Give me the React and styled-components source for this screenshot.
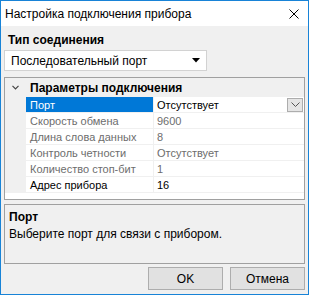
import React from 'react';
import styled, { createGlobalStyle } from 'styled-components';

const Global = createGlobalStyle`
  html, body { margin: 0; padding: 0; background: #ffffff; }
  * { box-sizing: border-box; }
`;

const FONT = `"Liberation Sans", Arial, sans-serif`;

const Window = styled.div`
  width: 309px;
  height: 295px;
  border: 1px solid #1883d7;
  display: flex;
  flex-direction: column;
  font-family: ${FONT};
  font-size: 12px;
  color: #000;
`;

const TitleBar = styled.div`
  height: 25px;
  background: #fff;
  display: flex;
  align-items: center;
  justify-content: space-between;
  padding: 0 9px 0 4px;
`;

const Title = styled.span`
  font-size: 12px;
  padding-top: 1px;
`;

const Body = styled.div`
  flex: 1;
  background: #f0f0f0;
  display: flex;
  flex-direction: column;
  padding: 5px 3px 3px 3px;
`;

const SectionLabel = styled.div`
  font-weight: bold;
  font-size: 12px;
  height: 19px;
  padding-left: 4px;
  line-height: 14px;
  padding-top: 2px;
`;

const Combo = styled.div`
  width: 203px;
  height: 21px;
  background: #fff;
  border: 1px solid #d2d2d2;
  display: flex;
  align-items: center;
  justify-content: space-between;
  padding: 0 6px 0 6px;
  margin-bottom: 6px;
`;

const Grid = styled.div`
  height: 123px;
  background: #fff;
  border: 1px solid #a0a0a0;
  display: flex;
  flex-direction: column;
  font-size: 11px;
`;

const CategoryRow = styled.div`
  height: 19px;
  display: flex;
  align-items: center;
  background: #f0f0f0;
`;

const Margin = styled.div`
  width: 21px;
  flex: none;
  align-self: stretch;
  background: #f0f0f0;
  display: flex;
  align-items: center;
  justify-content: center;
`;

const CategoryName = styled.span`
  font-weight: bold;
  font-size: 12px;
  padding-left: 4px;
`;

const Row = styled.div`
  height: 16px;
  display: flex;
  border-bottom: 1px solid #f0f0f0;
`;

const NameCell = styled.div`
  width: 128px;
  flex: none;
  padding-left: 4px;
  display: flex;
  align-items: center;
  border-right: 1px solid #f0f0f0;
  background: ${p => (p.$selected ? '#0078d7' : '#fff')};
  color: ${p => (p.$selected ? '#fff' : p.$dim ? '#6d6d6d' : '#000')};
`;

const ValueCell = styled.div`
  flex: 1;
  display: flex;
  align-items: center;
  justify-content: space-between;
  padding-left: 3px;
  color: ${p => (p.$dim ? '#6d6d6d' : '#000')};
`;

const DropButton = styled.div`
  width: 16px;
  height: 14px;
  margin-right: 1px;
  background: #e5e5e5;
  border: 1px solid #adadad;
  display: flex;
  align-items: center;
  justify-content: center;
`;

const HelpPane = styled.div`
  margin-top: 4px;
  height: 60px;
  border: 1px solid #a0a0a0;
  padding: 5px 4px;
  display: flex;
  flex-direction: column;
  gap: 3px;
`;

const HelpTitle = styled.div`
  font-weight: bold;
`;

const Buttons = styled.div`
  margin-top: auto;
  display: flex;
  justify-content: flex-end;
  gap: 7px;
  padding-bottom: 1px;
`;

const Button = styled.div`
  width: 75px;
  height: 23px;
  background: #e1e1e1;
  border: 1px solid #adadad;
  display: flex;
  align-items: center;
  justify-content: center;
`;

const rows = [
  { name: 'Порт', value: 'Отсутствует', selected: true, drop: true },
  { name: 'Скорость обмена', value: '9600', dim: true },
  { name: 'Длина слова данных', value: '8', dim: true },
  { name: 'Контроль четности', value: 'Отсутствует', dim: true },
  { name: 'Количество стоп-бит', value: '1', dim: true },
  { name: 'Адрес прибора', value: '16' },
];

const App = () => (
  <Window>
    <Global />
    <TitleBar>
      <Title>Настройка подключения прибора</Title>
      <svg width="10" height="10" viewBox="0 0 10 10">
        <path d="M0.5 0.5 L9.5 9.5 M9.5 0.5 L0.5 9.5" stroke="#000" strokeWidth="1" />
      </svg>
    </TitleBar>
    <Body>
      <SectionLabel>Тип соединения</SectionLabel>
      <Combo>
        <span>Последовательный порт</span>
        <svg width="8" height="5" viewBox="0 0 8 5">
          <path d="M0 0 H8 L4 4.5 Z" fill="#000" />
        </svg>
      </Combo>
      <Grid>
        <CategoryRow>
          <Margin>
            <svg width="7" height="5" viewBox="0 0 7 5">
              <path d="M0.5 0.8 L3.5 3.8 L6.5 0.8" stroke="#444" strokeWidth="1.2" fill="none" />
            </svg>
          </Margin>
          <CategoryName>Параметры подключения</CategoryName>
        </CategoryRow>
        {rows.map(r => (
          <Row key={r.name}>
            <Margin />
            <NameCell $selected={r.selected} $dim={r.dim}>{r.name}</NameCell>
            <ValueCell $dim={r.dim}>
              <span>{r.value}</span>
              {r.drop && (
                <DropButton>
                  <svg width="9" height="5" viewBox="0 0 9 5">
                    <path d="M0.5 0.5 L4.5 4.5 L8.5 0.5" stroke="#555" strokeWidth="1" fill="none" />
                  </svg>
                </DropButton>
              )}
            </ValueCell>
          </Row>
        ))}
      </Grid>
      <HelpPane>
        <HelpTitle>Порт</HelpTitle>
        <div>Выберите порт для связи с прибором.</div>
      </HelpPane>
      <Buttons>
        <Button>OK</Button>
        <Button>Отмена</Button>
      </Buttons>
    </Body>
  </Window>
);

export default App;
